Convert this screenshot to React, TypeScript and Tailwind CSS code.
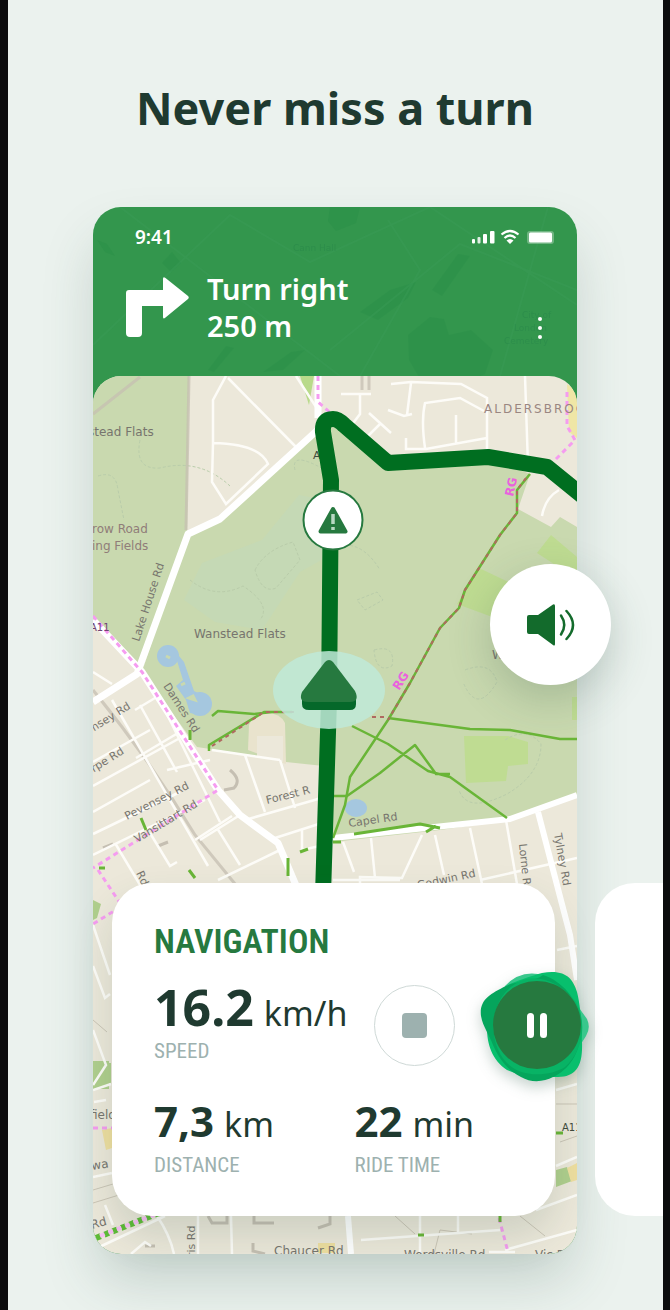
import type { ReactNode } from "react";

const sans = "font-['Noto_Sans','Open_Sans',sans-serif]";
const narrow = "font-['Roboto_Condensed','Liberation_Sans_Narrow',Roboto,sans-serif]";

function StatusIcons() {
  return (
    <svg viewBox="472 228 84 18" className="h-[18px] w-[84px]" fill="#fff" aria-hidden="true">
      <rect x="472" y="239" width="3" height="4.500" rx="1" />
      <rect x="477.500" y="237" width="3" height="6.500" rx="1" opacity=".85" />
      <rect x="483" y="234" width="4" height="9.500" rx="1" />
      <rect x="490" y="231" width="4.500" height="12.500" rx="1" />
      <g fill="none" stroke="#fff" strokeWidth="2.200">
        <path d="M501.500 234.500Q510 227.500 518.500 234.500" />
        <path d="M504.500 238Q510 233 515.500 238" />
      </g>
      <path d="M506.500 240.500Q510 237.500 513.500 240.500L510 244Z" />
      <rect x="527" y="231" width="27" height="13" rx="3" opacity=".3" />
      <rect x="529" y="232.500" width="23" height="10" rx="1.500" />
    </svg>
  );
}

function HeaderPattern() {
  return (
    <svg
      viewBox="93 207 484 190"
      preserveAspectRatio="xMidYMin slice"
      className="absolute inset-0 h-full w-full"
      aria-hidden="true"
    >
      <g fill="#2b8f49" opacity=".5">
        <path d="M408 335l22-18 14 2 5 16 22-5 22 20-8 24-22 10h-40l-14-24z" />
        <path d="M162 263l10-11 9 11-10 9z M360 312l30-22 26-8-8 16-30 22z M330 207h30l-4 16-20 8-8-10z M432 290l26-36 12 2-28 40z" />
        <path d="M208 370l18-24 8 2-20 24z M263 372l28-20 14-2-22 20z M97 240l10 4 8 12-10-4z" />
      </g>
      <g fill="none" stroke="#3a9c56" strokeWidth="2" opacity=".45">
        <path d="M93 345L230 215 310 262 430 207 577 305M330 350L460 244 577 290M120 207L340 376M388 220L420 270 360 376M548 207L500 376" />
      </g>
      <g className="font-['DejaVu_Sans',sans-serif]" fontSize="9" fill="#27864a" opacity=".5">
        <text x="293" y="251">Cann Hall</text>
        <text x="522" y="318">City of</text>
        <text x="514" y="331">London</text>
        <text x="504" y="344">Cemetery</text>
      </g>
    </svg>
  );
}

function MapPicture() {
  return (
    <svg
      viewBox="93 376 484 878"
      preserveAspectRatio="xMidYMin slice"
      className="absolute inset-0 h-full w-full rounded-[28px]"
      role="img"
      aria-label="Map of Wanstead Flats with the route"
    >
      <rect x="93" y="376" width="484" height="878" fill="#ece8da" />
      {/* parks */}
      <path d="M93 376H189L187 534 142 672 93 624Z" fill="#c9d9af" />
      <path
        d="M187 534L219 520 318 430 336 418 392 464 490 458 530 474 518 509 551 527 560 517 577 527V796L510 820 440 830 333 842V767L286 762 284 760 230 752 197 747 142 672Z"
        fill="#c9d9af"
      />
      <path d="M299 495L262 540 202 563 184 600 215 622 262 630 300 572 325 558V500Z" fill="#c5d9b5" />
      <path d="M300 376H314L309 405Z" fill="#b9da8b" />
      <path d="M551 535l26 22v22l-40-26z M479 568l38 18-22 32-38-14z M464 736h44l20 6v22l-20 2-2 15-40 2z M572 697h5v23h-5z" fill="#bfdc92" />
      <path d="M567 384q10 6 10 16v38l-8-6z" fill="#efe6a6" />
      <path d="M249 725q5-12 18-12t18 10l1 41-38-14z" fill="#e9e3cd" />
      <path d="M257 736h26v26l-26-4z" fill="#ece8da" />
      <path d="M93 1061h16v28H93z M97 1063h14v20H98z M556 1170l11-3 5 14-16 6z M93 900l8 4-4 14-4 2z" fill="#b0cf8d" />
      <path d="M102 1130l10-2v20l-6 2z M567 1168l10-5v17l-6 2z M318 1243h17v10h-17z" fill="#efdfa0" />
      {/* ponds */}
      <g fill="#a5c7df">
        <circle cx="168" cy="656" r="11" />
        <path d="M174 650L184 662 194 691 210 699 211 708 202 715 190 713 186 700 176 686 183 680 178 664Z" />
        <circle cx="200" cy="704" r="12" />
        <ellipse cx="356" cy="808" rx="11" ry="9" />
      </g>
      <path d="M166 656l4 2M189 698l6 2-2-4zM181 685l4-2" stroke="#c9d9af" strokeWidth="3" />
      {/* contours */}
      <g fill="none" stroke="#b9ccaa" strokeWidth="1" strokeDasharray="3 2">
        <path d="M255 570Q265 550 293 542L300 560 276 588Q262 594 255 570ZM190 580Q215 600 243 586 272 605 260 620M98 476Q116 470 118 490L124 520M140 440Q134 470 160 468 200 458 230 486M295 470Q290 450 325 470M345 545Q365 545 380 570M357 600l20-8 6 8-18 10zM374 650q22-6 18 16-16 8-18-16M465 670q26-10 32 12-20 34-34 0M505 740q22-14 36 4 0 30-34 50-40 20-48-4" />
      </g>
      {/* railways and buildings */}
      <g fill="none" stroke="#c5bfb2" strokeWidth="3">
        <path d="M189 376L186 530M93 414L140 377M362 376v14M369 376v14M93 690Q150 760 195 835L240 890" opacity=".75" />
        <path d="M230 770q12 10 4 18l-10 2M208 1216l4 7h15v-7M254 1216v7h20M330 1216v8l-12 4M253 1243v8l12 3M103 848l10-4M158 846l10-4M145 1246h10" />
      </g>
      <g fill="none" stroke="#cbc5b6" strokeWidth="1">
        <path d="M93 1203l26-8M93 1190l20-6M556 1104h21M560 1142l17-6M395 1216l20 18M434 1254l6-24 32 4M520 1216l25 20M93 1020l14 12" />
      </g>
      {/* minor streets */}
      <g fill="none" stroke="#fdfcf8" strokeWidth="2.500">
        <path d="M226 376L213 400V443L212 482 226 504 268 464Q260 444 213 443M228 378L296 447M296 376L318 410M341 394h30M360 394v20l-12 16M369 413L391 433M380 424l-12 12M391 384l20-2 50 2 26 14v54M411 383l-4 32M388 410l16 6 8-2M525 376l3 90M456 415v29M425 448Q421 420 425 403L460 398 484 411M406 438v11h20L487 438M559 490q-14 8-17 26" />
        <path d="M93 672L112 684M93 786L180 738M93 762L150 730M112 700L208 866M93 812L150 780M93 834L180 792M136 758L178 733M140 705L177 772M160 700L220 822M135 710L160 695M167 770L210 760M93 855L205 800M195 840L232 816M115 843L158 915M150 833L170 866 177 862M217 828L240 865M200 840L240 815M218 880L280 850M245 820L325 797M275 838L325 822M245 755L265 812M280 760L295 808M212 750L280 760M302 830v20l22-5" />
        <path d="M343 842L354 872M371 838l4 40M422 835L402 878 360 877v8M333 880H400M435 835L444 875M470 828L482 884M506 820L517 884M480 880L577 858M93 925L110 975M93 966l12 32 5-4M93 1030L106 1065 93 1085M106 1100l-12 2M93 1177l19-4M105 1205l8 20M93 1090l18-6M557 950l20-4M556 1090l21-6M556 1166l21-9M536 1210L577 1195" />
        <path d="M93 1250L165 1216M157 1216Q170 1235 174 1254M131 1254l14-12 6 4M231 1216l1 38M198 1216v38M361 1240L500 1230M420 1216v38M458 1216v16M505 1250L577 1230M489 1252h26" />
      </g>
      {/* major roads */}
      <g fill="none" stroke="#ffffff" strokeWidth="7" strokeLinejoin="round">
        <path d="M322 426L220 519 188 534 137 674 93 702" />
        <path d="M93 620L142 672 218 790 240 815 278 843 298 890" />
        <path d="M318 376V418" />
        <path d="M333 838L425 828 510 819 577 795" strokeWidth="6" />
        <path d="M538 812L570 935 577 980M348 1216l3 38" strokeWidth="6" />
      </g>
      {/* cycle routes */}
      <g fill="none" stroke="#f59cf0" strokeWidth="3" strokeDasharray="5 4">
        <path d="M93 616L142 672 218 790 93 868M98 870L122 906 93 924M318 376v26l16 14M567 392v34l8 14-22 22M93 1128h20M499 1218l9 34" />
        <path d="M96 1238L164 1211" stroke="#5ebc37" strokeWidth="6" />
        <path d="M100 1236L164 1211" stroke="#f8bff4" strokeWidth="4" />
      </g>
      <g fill="none" stroke="#69b537" strokeWidth="2.500" strokeLinejoin="round">
        <path d="M530 474L517 490V513L500 535 465 590 459 608 440 628 410 683 388 720 350 777 345 805 333 838" />
        <path d="M212 716l6-5 36 3 18-2M352 726L388 744 428 771 450 777 507 818M333 796h14L380 773 415 745 436 774 450 774M388 718L470 729 510 730 560 739H577M209 751v-6l55-33h28" />
        <path d="M354 834L420 824 440 828M426 832l10-6M141 818l5 12M99 868h6M300 852l8-3M288 858v18M190 730v10M189 870l6 8M333 842h8M418 1235h6M500 1216v6M556 1133h7" strokeWidth="3" />
      </g>
      <g fill="none" stroke="#b06960" strokeWidth="2" strokeDasharray="4 4">
        <path d="M526 478L517 490V513L500 535 465 590 459 608 440 628 410 683 388 720M212 746L264 712h30M372 717h16" />
      </g>
      {/* map labels */}
      <g className="font-['DejaVu_Sans',sans-serif]" fontSize="12" fill="#77756e">
        <text x="88" y="436">stead Flats</text>
        <text x="92" y="533" fill="#907d79">row Road</text>
        <text x="92" y="550" fill="#907d79">ing Fields</text>
        <text x="194" y="638">Wanstead Flats</text>
        <text x="484" y="413" fill="#9a8681" letterSpacing="2">ALDERSBROOK</text>
        <text x="90" y="631" fontSize="10" fill="#714374">A11</text>
        <text x="492" y="659">W</text>
        <text x="313" y="459" fontSize="11" fill="#3f4b3c">A</text>
        <text transform="translate(139 642) rotate(-72)" fontSize="11">Lake House Rd</text>
        <text transform="translate(163 686) rotate(57)" fontSize="11">Dames Rd</text>
        <text transform="translate(85 737) rotate(-32)" fontSize="11">amsey Rd</text>
        <text transform="translate(88 776) rotate(-32)" fontSize="11">orpe Rd</text>
        <text transform="translate(127 820) rotate(-27)" fontSize="11">Pevensey Rd</text>
        <text transform="translate(137 843) rotate(-31)" fontSize="11">Vansittart Rd</text>
        <text transform="translate(136 873) rotate(65)" fontSize="11">Rd</text>
        <text transform="translate(267 804) rotate(-14)" fontSize="11">Forest R</text>
        <text transform="translate(349 827) rotate(-8)" fontSize="11">Capel Rd</text>
        <text transform="translate(418 889) rotate(-12)" fontSize="11">Godwin Rd</text>
        <text transform="translate(519 844) rotate(84)" fontSize="11">Lorne Rd</text>
        <text transform="translate(554 834) rotate(80)" fontSize="11">Tylney Rd</text>
        <text x="90" y="1119">field</text>
        <text transform="translate(92 1170) rotate(-9)">wa Rd</text>
        <text transform="translate(92 1229) rotate(-15)">Rd</text>
        <text transform="translate(195 1257) rotate(-90)" fontSize="11">ris Rd</text>
        <text x="274" y="1255">Chaucer Rd</text>
        <text x="404" y="1259">Wordsville Rd</text>
        <text x="535" y="1259">Vic Rd</text>
        <text x="562" y="1131" fontSize="10" fill="#3f4b3c">A114</text>
      </g>
      <g className="font-['DejaVu_Sans',sans-serif]" fontSize="12" fontWeight="700" fill="#ea62dd">
        <text transform="translate(513 497) rotate(-77)">RG</text>
        <text transform="translate(399 691) rotate(-57)">RG</text>
      </g>
      {/* route */}
      <path
        d="M323 895L329 700 331 480 323 432Q322 419 333 419 338 419 344 425L388 463 488 457 547 467 590 502"
        fill="none"
        stroke="#006e20"
        strokeWidth="16"
        strokeLinejoin="round"
      />
      <ellipse cx="329" cy="690" rx="56" ry="39" fill="#bfe9d8" opacity=".85" />
      <path d="M302 694l8-6h40l6 6v10q0 6-6 6H309q-7 0-7-6z" fill="#05682a" />
      <path d="M325 662Q329 658 333 662L355 691Q360 702 350 702H308Q298 702 302 692Z" fill="#26793f" />
      <circle cx="333" cy="520" r="29.500" fill="#fff" stroke="#26793f" strokeWidth="2" />
      <path d="M333 509L345.500 531.500H320.500Z" fill="#26793f" stroke="#26793f" strokeWidth="4" strokeLinejoin="round" />
      <path d="M333 514v10M333 527v3" stroke="#b8d8c3" strokeWidth="3.500" />
    </svg>
  );
}

function Blob() {
  return (
    <svg
      viewBox="480 970 112 114"
      className="absolute -left-[13px] -top-[11px] h-[114px] w-[112px] drop-shadow-[0_6px_7px_rgba(30,80,60,0.25)]"
      aria-hidden="true"
    >
      <path
        d="M505 986Q519 971 538 974 562 980 577 1005L587 1019Q591 1028 586 1036L579 1047 540 1074 490 1040Z"
        fill="#39c78c"
      />
      <path
        d="M508 985C524 978 532 976 542 973 566 969 573 979 577 992 580 1004 582 1022 582 1042 583 1066 576 1077 558 1077 540 1077 522 1077 507 1070 492 1060 487 1044 487 1028Z"
        fill="#08bf6d"
      />
      <path
        d="M506 986C490 994 479 1000 481 1016 483 1027 489 1034 493 1045 500 1061 509 1071 521 1077 531 1083 544 1082 553 1077 570 1069 583 1051 580 1021 578 999 562 981 543 975 535 982 519 980 506 986Z"
        fill="#05a55c"
      />
      <path
        d="M515 984C535 971 560 982 576 1002 588 1024 582 1053 565 1067 549 1077 520 1078 506 1062 488 1043 488 1001 515 984Z"
        fill="#08b365"
      />
    </svg>
  );
}

function Stat({ value, unit, label }: { value: ReactNode; unit: string; label: string }) {
  return (
    <div>
      <p className="flex items-baseline gap-2.5 whitespace-nowrap leading-[44px]">
        <strong className="text-[42px] font-bold leading-[44px]">{value}</strong>
        <span className="text-[34px] leading-none">{unit}</span>
      </p>
      <p className={`mt-2 text-[21px] leading-7 text-[#9db1af] ${narrow}`}>{label}</p>
    </div>
  );
}

export default function App() {
  return (
    <div className={`overflow-hidden bg-[#0b0c0d] pl-2 pr-[7px] text-[#1f3a30] ${sans}`}>
      <main className="overflow-hidden bg-[#ebf2ee] pb-14 pl-[85px] pr-[86px] pt-[78px]">
        <h1 className="whitespace-nowrap text-center text-[45px] font-bold leading-[60px]">Never miss a turn</h1>

        <section className="mt-[69px] rounded-[28px] bg-[#33964d] shadow-[0_30px_56px_-6px_rgba(45,80,68,0.22)]">
          <header className="relative pb-8 pt-5 text-white">
            <div className="absolute inset-0 overflow-hidden rounded-t-[28px]">
              <HeaderPattern />
            </div>
            <div className="relative flex items-center justify-between pl-[42px] pr-[21px]">
              <span className="text-[19px] font-semibold leading-5">9:41</span>
              <StatusIcons />
            </div>
            <div className="relative mt-[23px] flex items-center gap-[18px] pl-[33px] pr-[27px]">
              <svg viewBox="126 277 63 60" className="h-[60px] w-[63px]" fill="#fff" aria-hidden="true">
                <path d="M129 290H163V279Q163 276 165.500 278L188 296Q189.500 297.500 188 299L165.500 317.500Q163 319.500 163 317V306H142V333Q142 337 138 337H130Q126 337 126 333V293Q126 290 129 290Z" />
              </svg>
              <p className="flex-1 text-[29px] font-semibold leading-[37px]">
                Turn right
                <br />
                250 m
              </p>
              <button type="button" aria-label="More options" className="flex h-8 w-5 flex-col items-center justify-center gap-[5px] self-end">
                <span className="size-1 rounded-full bg-white" />
                <span className="size-1 rounded-full bg-white" />
                <span className="size-1 rounded-full bg-white" />
              </button>
            </div>
          </header>

          <div className="relative pb-[38px] pt-[507px]">
            <MapPicture />

            <button
              type="button"
              aria-label="Sound"
              className="absolute -right-[34px] top-[188px] flex size-[121px] items-center justify-center rounded-full bg-white shadow-[0_14px_44px_rgba(45,80,68,0.24)]"
            >
              <svg viewBox="527 602 49 46" className="h-[46px] w-[49px]" aria-hidden="true">
                <path d="M530 615H539L554 604.500Q556 603.500 556 606V644Q556 646.500 554 645L539 634H530Q528 634 528 632V617Q528 615 530 615Z" fill="#136b2c" />
                <g fill="none" stroke="#136b2c" strokeWidth="2.500" strokeLinecap="round">
                  <path d="M562 615.500Q568.500 625 562 634.500" />
                  <path d="M567.500 611Q580.500 625 567.500 639" />
                </g>
              </svg>
            </button>

            <div className="relative -mr-[86px] flex gap-10 pl-[19px]">
              <article className="flex-1 rounded-[40px] bg-white pb-[37px] pl-[42px] pt-[38px] shadow-[0_20px_40px_rgba(45,80,68,0.16)]">
                <h2 className={`text-[34px] font-semibold leading-10 text-[#26793f] ${narrow}`}>NAVIGATION</h2>
                <div className="-mr-[26px] mt-5 flex items-start">
                  <div className="flex-1">
                    <p className="flex items-baseline gap-2.5 whitespace-nowrap leading-[52px]">
                      <strong className="text-[50px] font-bold leading-[52px]">16.2</strong>
                      <span className="text-[34px] leading-none">km/h</span>
                    </p>
                    <p className={`text-[21px] leading-9 text-[#9db1af] ${narrow}`}>SPEED</p>
                  </div>
                  <button
                    type="button"
                    aria-label="Stop"
                    className="mr-[38px] flex size-[81px] items-center justify-center self-center rounded-full border border-[#cfd9d7] bg-white"
                  >
                    <span className="size-[25px] rounded bg-[#9db1af]" />
                  </button>
                  <div className="relative size-[88px]">
                    <Blob />
                    <button
                      type="button"
                      aria-label="Pause"
                      className="relative flex size-[88px] items-center justify-center gap-1.5 rounded-full bg-[#26793f]"
                    >
                      <span className="h-[25px] w-[7px] rounded-sm bg-white" />
                      <span className="h-[25px] w-[7px] rounded-sm bg-white" />
                    </button>
                  </div>
                </div>
                <div className="mt-[30px] grid grid-cols-2">
                  <Stat value="7,3" unit="km" label="DISTANCE" />
                  <Stat value="22" unit="min" label="RIDE TIME" />
                </div>
              </article>
              <article aria-label="Next card" className="w-[68px] rounded-l-[40px] bg-white" />
            </div>
          </div>
        </section>
      </main>
    </div>
  );
}
